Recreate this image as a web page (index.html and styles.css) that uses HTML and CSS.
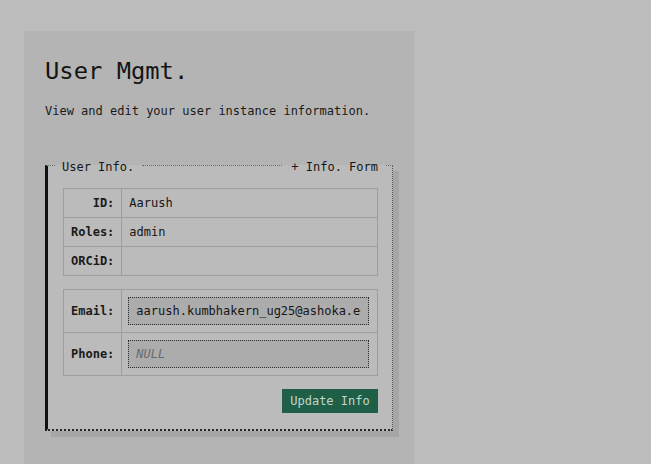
FILE: index.html
```html
<!DOCTYPE html>
<html lang="en">
<head>
<meta charset="utf-8">
<title>User Mgmt.</title>
<link rel="stylesheet" href="styles.css">
</head>
<body>
<div class="wrap">
  <main class="panel">
    <h1 class="title">User Mgmt.</h1>
    <p class="subtitle">View and edit your user instance information.</p>
    <fieldset class="card">
      <legend class="card-legend">
        <span class="legend-title">User Info.</span>
        <span class="legend-line"></span>
        <span class="legend-action">+ Info. Form</span>
      </legend>
      <table class="info-table">
        <tr><th class="lbl">ID:</th><td class="val">Aarush</td></tr>
        <tr><th class="lbl">Roles:</th><td class="val">admin</td></tr>
        <tr><th class="lbl">ORCiD:</th><td class="val"></td></tr>
      </table>
      <table class="form-table">
        <tr><th class="lbl">Email:</th><td class="fval"><input class="field" type="text" value="aarush.kumbhakern_ug25@ashoka.edu.in"></td></tr>
        <tr><th class="lbl">Phone:</th><td class="fval"><input class="field" type="text" placeholder="NULL"></td></tr>
      </table>
      <div class="actions">
        <button class="btn" type="button">Update Info</button>
      </div>
    </fieldset>
  </main>
</div>
</body>
</html>
```
FILE: styles.css
```css
html, body {
  margin: 0;
  background: #bcbcbc;
}
body {
  font-family: "DejaVu Sans Mono", "Liberation Mono", monospace;
  font-size: 12px;
  color: #151515;
}
.wrap {
  padding: 31px 0 0 24px;
}
.panel {
  box-sizing: border-box;
  width: 390px;
  height: 433px;
  background: #b4b4b4;
  padding: 26px 21px 0 21px;
}
.title {
  margin: 0;
  font-size: 23.8px;
  line-height: 28px;
  font-weight: normal;
  color: #141414;
}
.subtitle {
  margin: 18px 0 0 0;
  line-height: 16px;
  color: #1a1a1a;
}
.card {
  margin: 36px 0 0 0;
  padding: 0 14px 16px 15px;
  background: #bbbbbb;
  border-left: 3px solid #111;
  border-top: 1px dotted #6e6e6e;
  border-right: 1px dotted #555;
  border-bottom: 2px dotted #262626;
  box-shadow: 6px 6px 0 #a6a6a6;
  min-width: 0;
}
.card-legend {
  display: flex;
  align-items: flex-start;
  gap: 8px;
  width: calc(100% + 15px);
  box-sizing: border-box;
  margin-left: -7px;
  padding: 4px 8px 0 6px;
  line-height: 16px;
  color: #161616;
}
.legend-line {
  flex: 1;
  border-top: 1px dotted #6e6e6e;
  margin-top: 6px;
}
.legend-action {
  margin-left: 1px;
}
.info-table, .form-table {
  width: 100%;
  border-collapse: collapse;
  border: 1px solid #9e9e9e;
}
.info-table {
  margin-top: 13px;
}
.form-table {
  margin-top: 13px;
}
.info-table th, .info-table td, .form-table th, .form-table td {
  border: 1px solid #9e9e9e;
}
.lbl {
  width: 43px;
  text-align: right;
  padding: 0 7px 0 7px;
  font-weight: bold;
  color: #1a1a1a;
}
.info-table tr {
  height: 29px;
}
.val {
  padding: 0 7px;
}
.form-table tr {
  height: 43px;
}
.fval {
  padding: 0 8px 0 6px;
}
.field {
  display: block;
  width: 100%;
  box-sizing: border-box;
  height: 28px;
  margin: 0;
  padding: 0 7px;
  border: 1px dotted #2a2a2a;
  background: #acacac;
  font-family: inherit;
  font-size: 12px;
  color: #161616;
  outline: none;
}
.field::placeholder {
  font-style: italic;
  color: #6a6a6a;
}
.actions {
  display: flex;
  justify-content: flex-end;
  margin-top: 13px;
}
.btn {
  width: 96px;
  height: 24px;
  border: none;
  background: #1f5f48;
  color: #c3d6c9;
  font-family: inherit;
  font-size: 12px;
  padding: 0;
}
```
